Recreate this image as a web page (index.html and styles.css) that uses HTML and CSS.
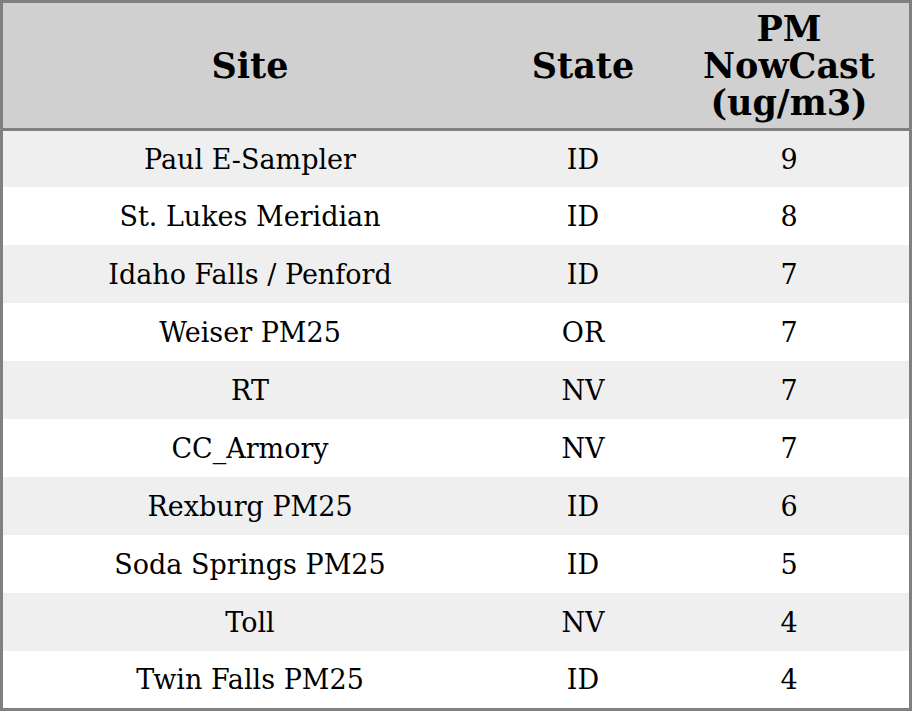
FILE: index.html
```html
<!DOCTYPE html>
<html>
<head>
<meta charset="utf-8">
<link rel="stylesheet" href="styles.css">
</head>
<body>
<table class="pm-table">
  <thead>
    <tr class="head-row">
      <th class="col-site">Site</th>
      <th class="col-state">State</th>
      <th class="col-pm">PM<br>NowCast<br>(ug/m3)</th>
    </tr>
  </thead>
  <tbody>
    <tr class="odd first"><td>Paul E-Sampler</td><td>ID</td><td>9</td></tr>
    <tr><td>St. Lukes Meridian</td><td>ID</td><td>8</td></tr>
    <tr class="odd"><td>Idaho Falls / Penford</td><td>ID</td><td>7</td></tr>
    <tr><td>Weiser PM25</td><td>OR</td><td>7</td></tr>
    <tr class="odd"><td>RT</td><td>NV</td><td>7</td></tr>
    <tr><td>CC_Armory</td><td>NV</td><td>7</td></tr>
    <tr class="odd"><td>Rexburg PM25</td><td>ID</td><td>6</td></tr>
    <tr><td>Soda Springs PM25</td><td>ID</td><td>5</td></tr>
    <tr class="odd"><td>Toll</td><td>NV</td><td>4</td></tr>
    <tr class="last"><td>Twin Falls PM25</td><td>ID</td><td>4</td></tr>
  </tbody>
</table>
</body>
</html>
```
FILE: styles.css
```css
html, body {
  margin: 0;
  padding: 0;
  background: #ffffff;
}
.pm-table {
  width: 912px;
  height: 711px;
  border-collapse: collapse;
  border: 3px solid #808080;
  font-family: "DejaVu Serif", serif;
  color: #000;
  table-layout: fixed;
}
.pm-table th {
  background: #d0d0d0;
  font-size: 35px;
  font-weight: bold;
  line-height: 37px;
  height: 125px;
  padding: 0;
  text-align: center;
  border-bottom: 3px solid #808080;
}
.col-site { width: 494px; }
.col-state { width: 172px; }
.col-pm { width: 240px; }
.pm-table td {
  font-size: 27px;
  line-height: 32px;
  text-align: center;
  padding: 1px 0 0;
  height: 57px;
}
.pm-table tr.first td { height: 55px; }
.pm-table tr.last td { height: 56px; }
.pm-table tr.odd td {
  background: #efefef;
}
```
